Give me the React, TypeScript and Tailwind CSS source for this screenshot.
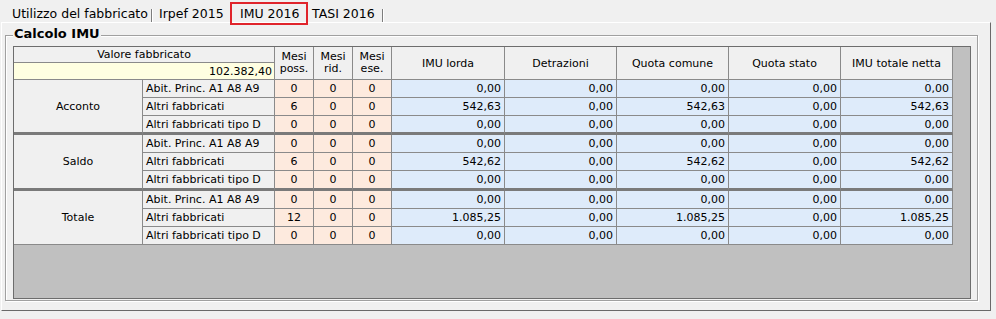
import React from 'react';

type Group = { label: string; rows: string[][] };

const groups: Group[] = [
  {
    label: 'Acconto',
    rows: [
      ['Abit. Princ. A1 A8 A9', '0', '0', '0', '0,00', '0,00', '0,00', '0,00', '0,00'],
      ['Altri fabbricati', '6', '0', '0', '542,63', '0,00', '542,63', '0,00', '542,63'],
      ['Altri fabbricati tipo D', '0', '0', '0', '0,00', '0,00', '0,00', '0,00', '0,00'],
    ],
  },
  {
    label: 'Saldo',
    rows: [
      ['Abit. Princ. A1 A8 A9', '0', '0', '0', '0,00', '0,00', '0,00', '0,00', '0,00'],
      ['Altri fabbricati', '6', '0', '0', '542,62', '0,00', '542,62', '0,00', '542,62'],
      ['Altri fabbricati tipo D', '0', '0', '0', '0,00', '0,00', '0,00', '0,00', '0,00'],
    ],
  },
  {
    label: 'Totale',
    rows: [
      ['Abit. Princ. A1 A8 A9', '0', '0', '0', '0,00', '0,00', '0,00', '0,00', '0,00'],
      ['Altri fabbricati', '12', '0', '0', '1.085,25', '0,00', '1.085,25', '0,00', '1.085,25'],
      ['Altri fabbricati tipo D', '0', '0', '0', '0,00', '0,00', '0,00', '0,00', '0,00'],
    ],
  },
];

const headers = ['IMU lorda', 'Detrazioni', 'Quota comune', 'Quota stato', 'IMU totale netta'];
const mesi = [['Mesi', 'poss.'], ['Mesi', 'rid.'], ['Mesi', 'ese.']];

const cell = 'flex items-center border-r border-b border-[#8a8a8a]';

function TabSep() {
  return <div className="mt-[9px] h-[13px] w-[2px] border-l border-[#7d7d7d] border-r border-r-white" />;
}

export default function App() {
  return (
    <div className="w-[996px] h-[319px] bg-[#f0f0f0] font-['DejaVu_Sans',sans-serif] text-black overflow-hidden">
      {/* Tabs */}
      <div className="flex h-[22px] text-[12.5px] leading-[15px]">
        <div className="w-[151px] pl-[12px] pt-[6px] whitespace-nowrap">Utilizzo del fabbricato</div>
        <TabSep />
        <div className="w-[77px] pl-[6px] pt-[6px] whitespace-nowrap">Irpef 2015</div>
        <div className="relative z-10 mt-[2px] h-[23px] w-[78px] border-2 border-[#e0242b] pl-[8px] pt-[2px] whitespace-nowrap">
          IMU 2016
        </div>
        <div className="w-[74px] pl-[4px] pt-[6px] whitespace-nowrap">TASI 2016</div>
        <TabSep />
      </div>

      {/* Panel */}
      <div className="ml-[1px] w-[990px] h-[289px] border border-white border-r-[#696969] border-b-[#696969] pl-[3px] pt-[12px]">
        {/* Group box */}
        <div className="relative w-[973px] h-[266px] border border-[#a0a0a0] shadow-[inset_1px_1px_0_#fff,1px_1px_0_#fff]">
          <span className="absolute left-[7px] top-[-10px] bg-[#f0f0f0] px-[1px] text-[13px] font-bold leading-[16px]">
            Calcolo IMU
          </span>

          {/* Grid */}
          <div className="ml-[7px] mt-[10px] w-[958px] h-[253px] border border-[#6d6d6d] bg-[#c0c0c0] text-[11px] leading-[13px]">
            <div className="grid w-fit grid-cols-[129px_132px_39px_39px_39px_113px_112px_112px_112px_112px] grid-rows-[16px_17px_18px_18px_19px_18px_18px_20px_18px_18px_18px]">
              <div className={`${cell} col-span-2 justify-center bg-[#f0f0f0]`}>Valore fabbricato</div>
              {mesi.map(([a, b], i) => (
                <div key={i} className={`${cell} row-span-2 flex-col justify-center bg-[#f0f0f0] leading-[12px]`}>
                  <span>{a}</span>
                  <span>{b}</span>
                </div>
              ))}
              {headers.map((h) => (
                <div key={h} className={`${cell} row-span-2 justify-center bg-[#f0f0f0]`}>
                  {h}
                </div>
              ))}
              <div className={`${cell} col-span-2 justify-end bg-[#ffffe1] pr-[2px]`}>102.382,40</div>

              {groups.map((g, gi) => {
                const thick = gi < 2 ? 'border-b-[3px] border-b-[#7a7a7a]' : '';
                return (
                  <React.Fragment key={g.label}>
                    <div className={`${cell} row-span-3 justify-center bg-[#f0f0f0] ${thick}`}>{g.label}</div>
                    {g.rows.map((r, ri) => {
                      const b = ri === 2 ? thick : '';
                      return (
                        <React.Fragment key={ri}>
                          <div className={`${cell} bg-[#f0f0f0] pl-[3px] whitespace-nowrap ${b}`}>{r[0]}</div>
                          {r.slice(1, 4).map((v, i) => (
                            <div key={'m' + i} className={`${cell} justify-center bg-[#fdeade] ${b}`}>
                              {v}
                            </div>
                          ))}
                          {r.slice(4).map((v, i) => (
                            <div key={'v' + i} className={`${cell} justify-end bg-[#deebfa] pr-[3px] ${b}`}>
                              {v}
                            </div>
                          ))}
                        </React.Fragment>
                      );
                    })}
                  </React.Fragment>
                );
              })}
            </div>
          </div>
        </div>
      </div>
    </div>
  );
}
